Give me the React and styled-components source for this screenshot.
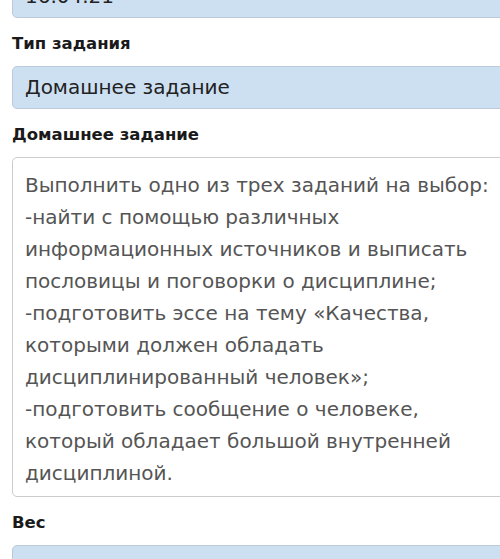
import React from "react";
import styled, { createGlobalStyle } from "styled-components";

const Global = createGlobalStyle`
  html, body { margin: 0; padding: 0; background: #ffffff; overflow: hidden; }
  body { font-family: "DejaVu Sans", "Noto Sans", sans-serif; }
`;

const Page = styled.div`
  width: 500px;
  height: 559px;
  overflow: hidden;
  position: relative;
`;

const Form = styled.div`
  display: flex;
  flex-direction: column;
  padding-left: 12px;
  margin-top: -25px;
  width: 520px;
`;

const Label = styled.div`
  font-weight: bold;
  font-size: 16.5px;
  line-height: 20px;
  color: #1a1a1a;
  margin: 16px 0 12px;
`;

const Field = styled.div`
  box-sizing: border-box;
  height: 43px;
  background: #cde0f2;
  border: 1px solid #bccada;
  border-radius: 5px;
  padding: 0 12px;
  font-size: 20px;
  line-height: 41px;
  color: #222;
  white-space: nowrap;
`;

const TextArea = styled.div`
  box-sizing: border-box;
  height: 340px;
  background: #fff;
  border: 1px solid #cccccc;
  border-radius: 5px;
  padding: 11px 12px 7px;
  font-size: 20px;
  line-height: 32px;
  color: #555;
`;

const Line = styled.div`
  white-space: nowrap;
`;

const lines = [
  "Выполнить одно из трех заданий на выбор:",
  "-найти с помощью различных",
  "информационных источников и выписать",
  "пословицы и поговорки о дисциплине;",
  "-подготовить эссе на тему «Качества,",
  "которыми должен обладать",
  "дисциплинированный человек»;",
  "-подготовить сообщение о человеке,",
  "который обладает большой внутренней",
  "дисциплиной.",
];

export default function App() {
  return (
    <Page>
      <Global />
      <Form>
        <Field>16.04.21</Field>
        <Label>Тип задания</Label>
        <Field>Домашнее задание</Field>
        <Label>Домашнее задание</Label>
        <TextArea>
          {lines.map((l, i) => (
            <Line key={i}>{l}</Line>
          ))}
        </TextArea>
        <Label>Вес</Label>
        <Field />
      </Form>
    </Page>
  );
}
